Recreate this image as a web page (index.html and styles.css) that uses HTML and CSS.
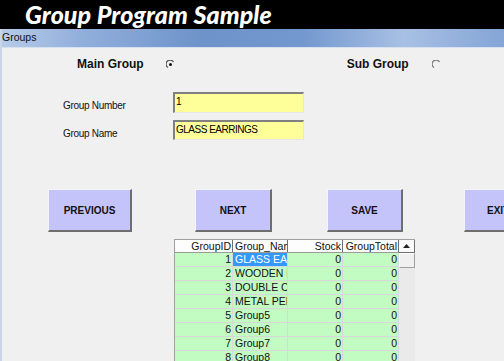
FILE: index.html
```html
<!DOCTYPE html>
<html lang="en">
<head>
  <meta charset="UTF-8">
  <title>Group Program Sample</title>
  <link rel="stylesheet" href="styles.css">
</head>
<body>
  <div class="banner">Group Program Sample</div>
  <div class="window">
    <div class="titlebar">Groups</div>
    <div class="form">
      <div class="radio-row">
        <span class="opt-label main-label">Main Group</span>
        <svg class="radio" width="9" height="9" viewBox="0 0 9 9">
          <path d="M7.5 2 A4 4 0 1 0 2 7.5" fill="none" stroke="#555" stroke-width="1.2"/>
          <circle cx="4.5" cy="4.5" r="1.5" fill="#111"/>
        </svg>
        <span class="opt-label sub-label">Sub Group</span>
        <svg class="radio" width="9" height="9" viewBox="0 0 9 9">
          <path d="M7.5 2 A4 4 0 1 0 2 7.5" fill="none" stroke="#777" stroke-width="1.2"/>
        </svg>
      </div>

      <div class="field">
        <span class="field-label">Group Number</span>
        <div class="input">1</div>
      </div>
      <div class="field second">
        <span class="field-label">Group Name</span>
        <div class="input">GLASS EARRINGS</div>
      </div>

      <div class="buttons">
        <div class="btn prev">PREVIOUS</div>
        <div class="btn next">NEXT</div>
        <div class="btn save">SAVE</div>
        <div class="btn exit">EXIT</div>
      </div>

      <div class="grid-wrap">
        <table class="grid">
          <tr class="head">
            <th class="c1 r">GroupID</th>
            <th class="c2">Group_Name</th>
            <th class="c3 r">Stock</th>
            <th class="c4 r">GroupTotal</th>
          </tr>
          <tr><td class="r">1</td><td class="sel">GLASS EARRINGS</td><td class="r">0</td><td class="r">0</td></tr>
          <tr><td class="r">2</td><td>WOODEN EARRINGS</td><td class="r">0</td><td class="r">0</td></tr>
          <tr><td class="r">3</td><td>DOUBLE CHAIN</td><td class="r">0</td><td class="r">0</td></tr>
          <tr><td class="r">4</td><td>METAL PENDANT</td><td class="r">0</td><td class="r">0</td></tr>
          <tr><td class="r">5</td><td>Group5</td><td class="r">0</td><td class="r">0</td></tr>
          <tr><td class="r">6</td><td>Group6</td><td class="r">0</td><td class="r">0</td></tr>
          <tr><td class="r">7</td><td>Group7</td><td class="r">0</td><td class="r">0</td></tr>
          <tr><td class="r">8</td><td>Group8</td><td class="r">0</td><td class="r">0</td></tr>
        </table>
        <div class="scroll">
          <div class="scroll-btn">
            <svg width="7" height="4" viewBox="0 0 7 4"><path d="M0 4 L3.5 0 L7 4 Z" fill="#222"/></svg>
          </div>
          <div class="thumb"></div>
          <div class="track"></div>
        </div>
      </div>
    </div>
  </div>
</body>
</html>
```

FILE: styles.css
```css
body {
  margin: 0;
  width: 504px;
  height: 361px;
  overflow: hidden;
  background: #f0f0f0;
  font-family: "Liberation Sans", Arial, sans-serif;
}
.banner {
  height: 29px;
  background: #000;
  color: #fff;
  font-family: Lato, "Liberation Sans", sans-serif;
  font-weight: 900;
  font-style: italic;
  font-size: 25px;
  letter-spacing: 0.1px;
  line-height: 28px;
  padding-left: 25px;
}
.window {
  border-left: 2px solid #c9d6e8;
  height: 332px;
  overflow: hidden;
}
.titlebar {
  height: 18px;
  background: linear-gradient(to right, #b7cbe8 0%, #93b0dc 15%, #6d93ca 40%, #7398cf 60%, #a8c0e4 80%, #84a5d6 100%);
  border-bottom: 1px solid #d6e2f2;
  font-size: 10.5px;
  line-height: 17px;
  color: #111;
}
.radio-row {
  display: flex;
  align-items: center;
  height: 16px;
  margin-top: 8px;
}
.opt-label {
  font-weight: bold;
  font-size: 12px;
  color: #111;
}
.main-label {
  margin-left: 75px;
}
.sub-label {
  margin-left: 172px;
}
.radio {
  margin-left: 22px;
}
.sub-label + .radio {
  margin-left: 23px;
}
.field {
  display: flex;
  align-items: center;
  margin-top: 20px;
  height: 21px;
}
.field.second {
  margin-top: 7px;
  height: 20px;
}
.field-label {
  width: 110px;
  padding-left: 61px;
  font-size: 10px;
  letter-spacing: -0.3px;
  color: #111;
  margin-top: 6px;
  flex-shrink: 0;
}
.input {
  width: 131px;
  height: 100%;
  box-sizing: border-box;
  background: #ffff99;
  border-top: 2px solid #808080;
  border-left: 2px solid #808080;
  border-right: 1px solid #e6e6e6;
  border-bottom: 1px solid #e6e6e6;
  font-size: 10px;
  letter-spacing: -0.5px;
  line-height: 15px;
  padding-left: 1px;
  color: #000;
}
.buttons {
  display: flex;
  margin-top: 49px;
  height: 43px;
}
.btn {
  flex-shrink: 0;
  height: 43px;
  box-sizing: border-box;
  background: #c4c4fb;
  border-top: 1px solid #f4f4ff;
  border-left: 1px solid #f4f4ff;
  border-right: 2px solid #6e6e6e;
  border-bottom: 2px solid #6e6e6e;
  font-weight: bold;
  font-size: 10px;
  color: #111;
  display: flex;
  align-items: center;
  justify-content: center;
}
.prev { margin-left: 46px; width: 84px; }
.next { margin-left: 63px; width: 77px; }
.save { margin-left: 55px; width: 76px; }
.exit { margin-left: 61px; width: 80px; justify-content: flex-start; padding-left: 22px; }
.grid-wrap {
  display: flex;
  margin-top: 7px;
  margin-left: 172px;
  border-top: 1px solid #a0a0a0;
  border-left: 1px solid #a0a0a0;
  width: 240px;
}
.grid {
  border-collapse: collapse;
  table-layout: fixed;
  width: 224px;
  font-size: 10.5px;
  color: #111;
}
.grid th, .grid td {
  height: 13px;
  padding: 0 1px 0 2px;
  white-space: nowrap;
  overflow: hidden;
  line-height: 13px;
  text-align: left;
  font-weight: normal;
  border-right: 1px solid #d8d8d8;
  border-bottom: 1px solid #d8d8d8;
}
.grid th {
  height: 12px;
  line-height: 12px;
  background: #fdfdfd;
  border-right: 1px solid #707070;
  border-bottom: 1px solid #9a9a9a;
}
.grid td {
  background: #c2fcc2;
}
.grid .r { text-align: right; }
.c1 { width: 54px; }
.c2 { width: 51px; }
.c3 { width: 51px; }
.c4 { width: 52px; }
.grid td.sel {
  background: #3399ff;
  color: #fff;
}
.scroll {
  width: 16px;
  display: flex;
  flex-direction: column;
}
.scroll-btn {
  height: 12px;
  background: #fafafa;
  border-right: 1px solid #707070;
  border-bottom: 1px solid #707070;
  display: flex;
  align-items: center;
  justify-content: center;
}
.thumb {
  height: 13px;
  background: #f0f0f0;
  border: 1px solid #a0a0a0;
  border-top-color: #fff;
  border-left-color: #fff;
}
.track {
  flex: 1;
  background: #eaeaea;
}
```
